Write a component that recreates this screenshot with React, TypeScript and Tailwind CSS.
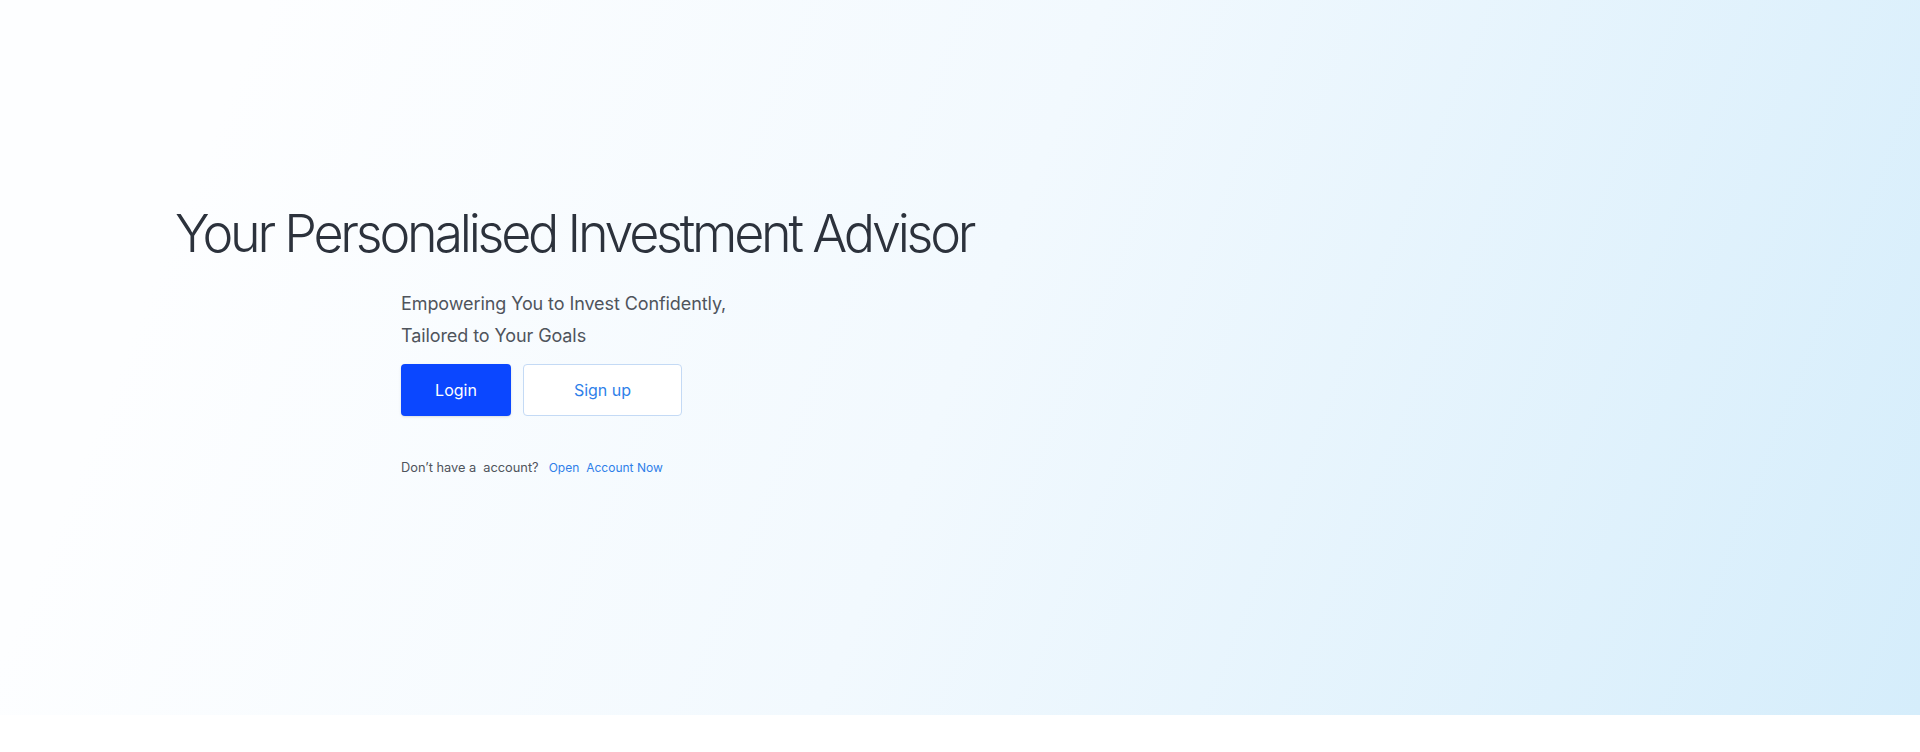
import React from 'react';

const Hero: React.FC = () => {
  return (
    <section className="h-[715px] bg-[linear-gradient(112deg,#fdfeff_12%,#f2f9fe_50%,#d5edfb_100%)] pt-[203px] pl-[175px]">
      <h1 className="text-[52px] leading-[62px] font-[350] tracking-[-0.062em] text-[#2c323c]">
        Your Personalised Investment Advisor
      </h1>
      <div className="ml-[226px] mt-[23px]">
        <p className="text-[18px] leading-8 tracking-[-0.005em] text-[#4f545c]">Empowering You to Invest Confidently,</p>
        <p className="text-[18px] leading-8 tracking-[-0.005em] text-[#4f545c]">Tailored to Your Goals</p>
        <div className="mt-[12px] flex gap-3">
          <button className="h-[52px] w-[110px] rounded bg-[#0b47ff] text-base text-white shadow-sm">
            Login
          </button>
          <button className="h-[52px] w-[159px] rounded border border-[#c4daf5] bg-white text-base text-[#2f7fe9]">
            Sign up
          </button>
        </div>
        <div className="mt-[42px] flex items-baseline leading-5">
          <span className="text-[12.8px] text-[#4f545c]">Don’t have a</span>
          <span className="ml-[7px] text-[12.8px] text-[#4f545c]">account?</span>
          <a href="#" className="ml-[10px] text-[12px] text-[#2f7fe9]">Open</a>
          <a href="#" className="ml-[7px] text-[12px] text-[#2f7fe9]">Account Now</a>
        </div>
      </div>
    </section>
  );
};

export default function App() {
  return (
    <div className="min-h-[752px] bg-white font-['Inter','Liberation_Sans',sans-serif]">
      <Hero />
    </div>
  );
}
